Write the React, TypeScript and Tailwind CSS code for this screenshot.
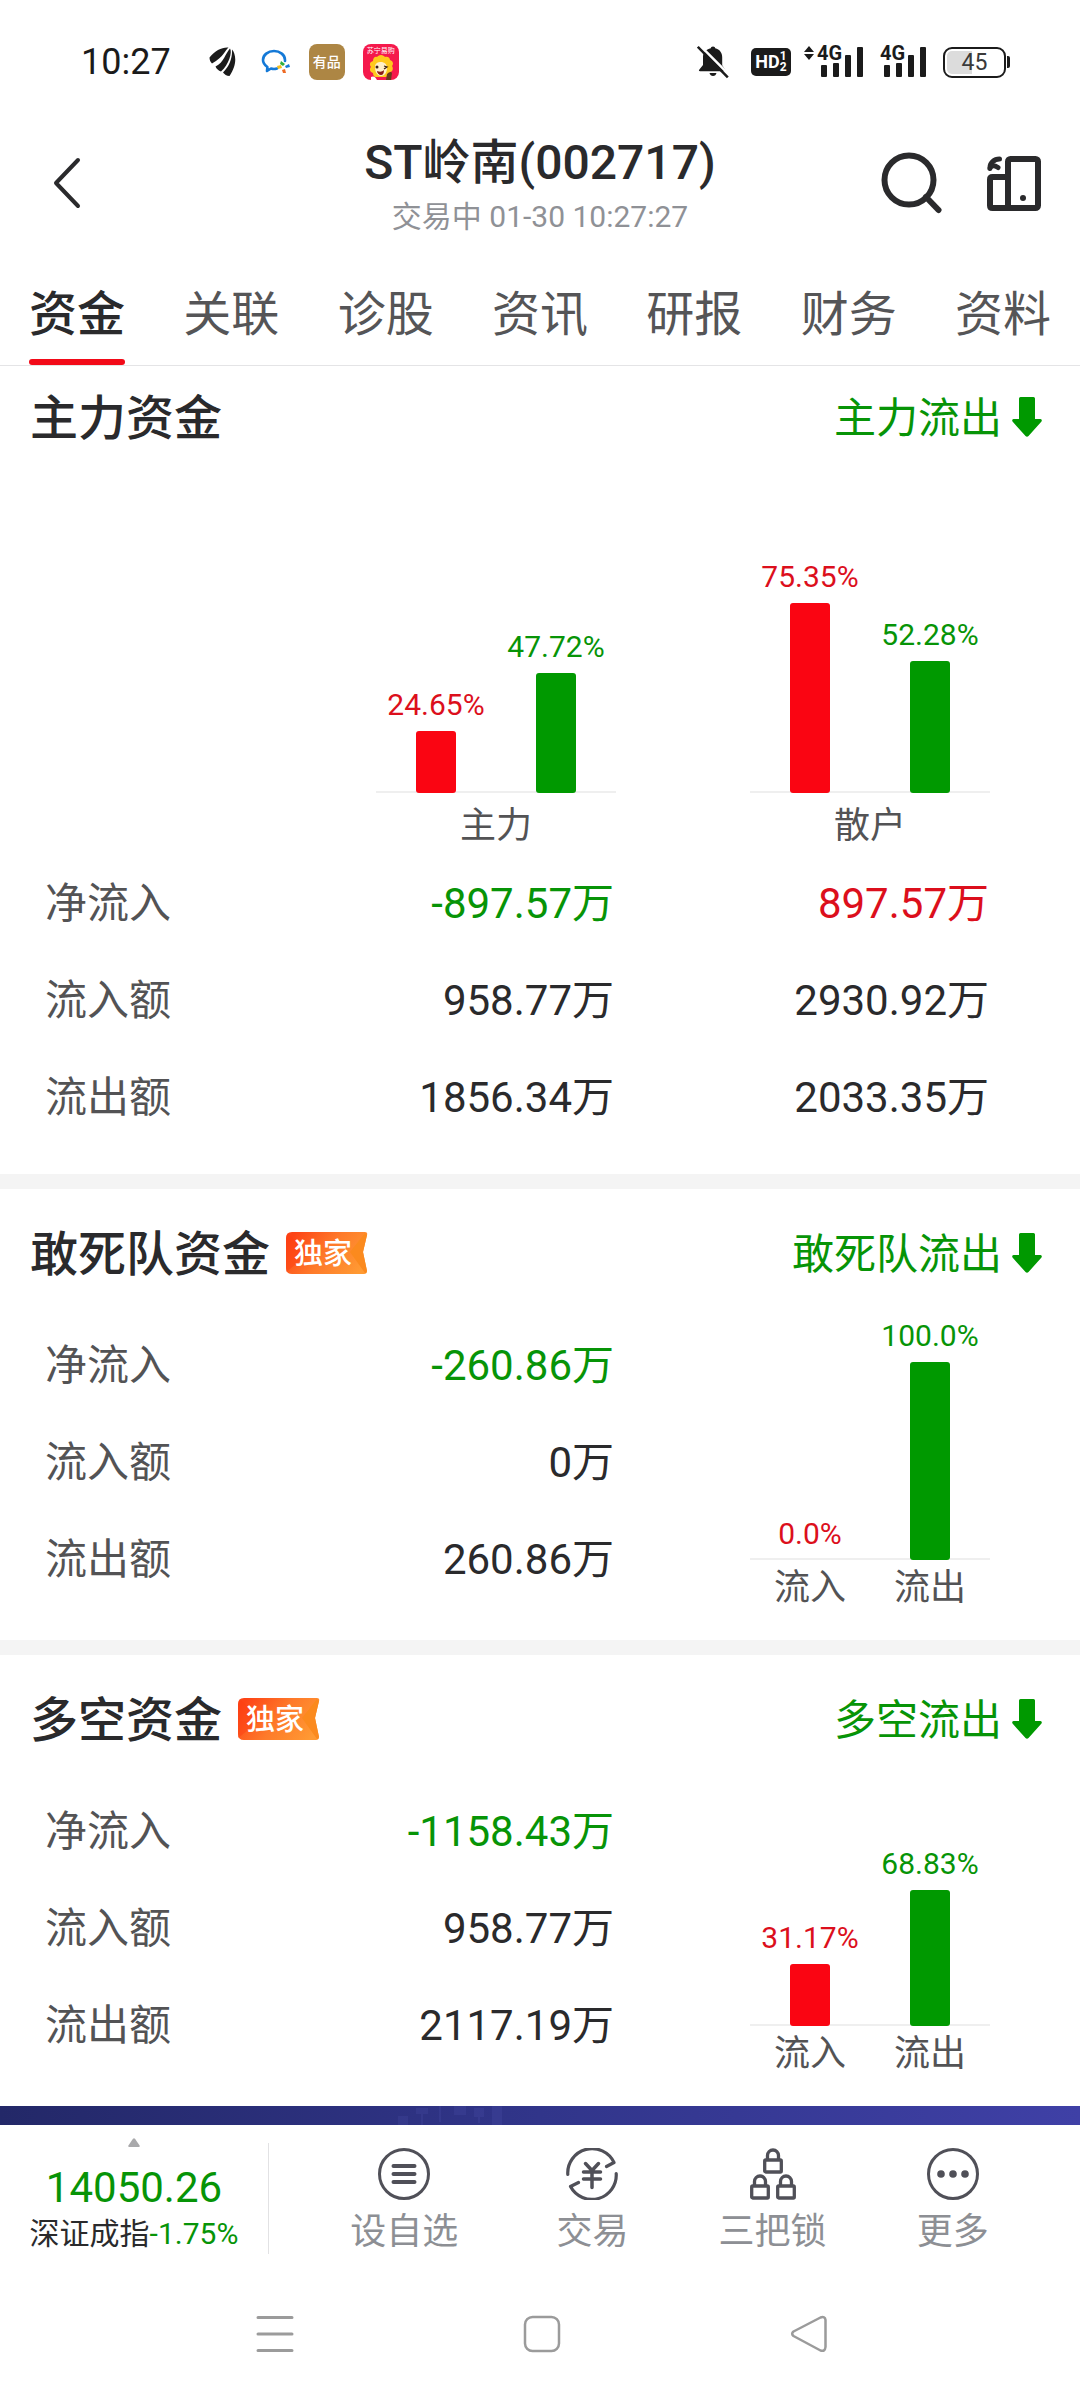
import type { ReactNode } from 'react';

type Tone = 'up' | 'down' | 'plain';

interface Bar {
  value: number;
  text: string;
  tone: 'up' | 'down';
  label?: string;
}

interface Row {
  label: string;
  cells: { text: string; tone: Tone }[];
}

const toneText: Record<Tone, string> = {
  up: 'text-[#dc0f1c]',
  down: 'text-[#079407]',
  plain: 'text-[#2a2a2c]',
};

const toneBar = {
  up: 'bg-[#fa0512]',
  down: 'bg-[#009900]',
};

/* ---------- status bar ---------- */

function WingIcon() {
  return (
    <svg width="28" height="32" viewBox="0 0 28 32" fill="#1b1b1b" aria-hidden="true">
      <path d="M.5 11.500C6 4.500 13 1 19.500 1.500 16 4 15 11 3 17.500 1.500 16 .5 14 .5 11.500Z" />
      <path d="M6.500 20.500C15 16.500 16.500 7 21 2.500c2.500 3.500-1 16-9 23C9.500 24.500 7.500 23 6.500 20.500Z" />
      <path d="M14 26.500C21 20 23.500 11 23 3.500c4 4.500 5.500 15-2.500 26.500-3-.2-5-1.500-6.500-3.500Z" />
    </svg>
  );
}

function ChatIcon() {
  return (
    <svg width="30" height="26" viewBox="0 0 30 26" fill="none" aria-hidden="true">
      <path
        d="M16 19.500c-2 .6-4 .6-6 0L6 22l.4-4C3.500 16 2 13.500 2 11 2 6 7 2 13 2s11 4 11 9v1"
        stroke="#1479d7"
        strokeWidth="2.600"
        strokeLinejoin="round"
        strokeLinecap="round"
      />
      <path d="m20 12 4 3-2 2-3-2z" fill="#2fae3f" />
      <path d="m28 15 1 3-4 1-1-2z" fill="#1479d7" />
      <path d="m24 20 1 4-3 0-1-3z" fill="#ee6a24" />
      <path d="m16 17 4-1 1 3-4 1z" fill="#f4bd1c" />
    </svg>
  );
}

function LionIcon() {
  return (
    <span className="relative block h-[36px] w-[36px]">
      <svg width="36" height="36" viewBox="0 0 36 36" className="rounded-[8px]" aria-hidden="true">
        <rect width="36" height="36" fill="#f5194c" />
        <path
          d="M18 11c2 0 3 1 4 2 3-1 5 1 5 3 3 1 4 4 2 6 2 3 0 6-2 6-1 3-3 5-5 5H13c-2 0-3-2-3-4-3-1-4-4-2-6-2-3-1-5 2-6 0-3 2-5 4-4 1-1 2-2 4-2Z"
          fill="#ffc91c"
        />
        <path d="M12 23c0-4 3-5 6-5s6 2 6 6c0 5-3 8-6 8s-6-3-6-9Z" fill="#fff0c9" />
        <circle cx="14" cy="23" r="1.500" fill="#3a2214" />
        <path d="m21 22 3 1-3 2" stroke="#3a2214" strokeWidth="1.300" fill="none" />
        <path d="M14 27c3 1 5 1 7-1 0 3-1 5-3 5s-4-2-4-4Z" fill="#8b1a16" />
        <path d="M24 30c2-2 4-3 5-1l-1 7h-5z" fill="#6b3a1c" />
        <path d="M8 33c2-1 4-1 6 3H8z" fill="#fff" />
      </svg>
      <span className="absolute inset-x-0 top-[2px] text-center text-[7px] leading-[10px] whitespace-nowrap text-white">苏宁易购</span>
    </span>
  );
}

function MutedBellIcon() {
  return (
    <svg width="32" height="34" viewBox="0 0 32 34" aria-hidden="true">
      <path
        d="M16 1.500c1.500 0 2 .8 2.200 1.800 4.500 1 7 4.500 7 9v8l3 4.500c.4.800.2 1.400-.8 1.400H3c-1 0-1.400-.6-.8-1.400L6 20v-8c0-4.500 3-7.700 7.800-8.700.2-1 .7-1.800 2.200-1.800Z"
        fill="#1b1b1b"
      />
      <path d="M12.500 28h7c-.5 2-1.700 3-3.500 3s-3-1-3.500-3Z" fill="#1b1b1b" />
      <path d="m2.500 0 30 30" stroke="#fff" strokeWidth="2.500" />
      <path d="m.8 1.800 30 30.500" stroke="#1b1b1b" strokeWidth="2.500" />
    </svg>
  );
}

function SignalIcon({ arrows }: { arrows?: boolean }) {
  return (
    <span className="relative block h-[34px] w-[62px]">
      <svg width="62" height="34" viewBox="0 0 62 34" fill="#1b1b1b" aria-hidden="true">
        {arrows && (
          <>
            <path d="m6 1 5 6H1zM6 15l5-6H1z" />
          </>
        )}
        <rect x="18" y="20" width="6" height="12" rx="1" />
        <rect x="30" y="18" width="6" height="14" rx="1" />
        <rect x="42" y="10" width="6" height="22" rx="1" />
        <rect x="54" y="2" width="6" height="30" rx="1" />
      </svg>
      <span className="absolute -top-[2px] left-[14px] text-[20px] leading-[20px] font-bold">4G</span>
    </span>
  );
}

function StatusBar() {
  return (
    <div className="flex h-[124px] items-center justify-between pr-[70px] pl-[81px] text-[#1b1b1b]">
      <div className="flex items-center">
        <span className="text-[36px] leading-[40px]">10:27</span>
        <div className="ml-[38px] flex items-center gap-[18px]">
          <WingIcon />
          <span className="ml-[6px]">
            <ChatIcon />
          </span>
          <span className="flex h-[36px] w-[36px] items-center justify-center rounded-[8px] bg-[#ad8644] text-[14px] leading-none font-medium text-white">
            有品
          </span>
          <LionIcon />
        </div>
      </div>
      <div className="flex items-center">
        <MutedBellIcon />
        <span className="ml-[22px] flex h-[28px] w-[40px] items-center justify-center rounded-[5px] bg-[#1b1b1b] font-bold text-white">
          <span className="text-[18px] leading-none">HD</span>
          <span className="flex flex-col text-[12px] leading-[11px]">
            <span>1</span>
            <span>2</span>
          </span>
        </span>
        <span className="ml-[12px] flex gap-px">
          <SignalIcon arrows />
          <SignalIcon />
        </span>
        <span className="relative ml-[15px] flex h-[31px] w-[63px] items-center justify-center rounded-[9px] border-2 border-[#1b1b1b] text-[23px] leading-none text-[#3a3a3a]">
          <span className="absolute top-[2px] bottom-[2px] left-[2px] w-[25px] rounded-l-[5px] bg-[#dcdcdc]" />
          <span className="relative">45</span>
        </span>
        <span className="ml-px h-[12px] w-[3px] rounded-r-[2px] bg-[#1b1b1b]" />
      </div>
    </div>
  );
}

/* ---------- header ---------- */

function Header() {
  return (
    <header className="grid h-[117px] grid-cols-[1fr_auto_1fr] items-center">
      <div className="pl-[49px]">
        <button type="button" aria-label="返回" className="block">
          <svg width="36" height="56" viewBox="0 0 36 56" fill="none" aria-hidden="true">
            <path d="M29 5 7 28l22 23" stroke="#2a2a2c" strokeWidth="4" strokeLinecap="round" strokeLinejoin="round" />
          </svg>
        </button>
      </div>
      <div className="pt-[2px] text-center">
        <h1 className="text-[48px] leading-[66px] font-medium text-[#2a2a2c]">ST岭南(002717)</h1>
        <p className="text-[30px] leading-[42px] text-[#8f9196]">交易中 01-30 10:27:27</p>
      </div>
      <div className="flex items-center justify-end gap-[43px] pr-[38px]">
        <button type="button" aria-label="搜索">
          <svg width="62" height="62" viewBox="0 0 62 62" fill="none" stroke="#2a2a2c" strokeWidth="6" aria-hidden="true">
            <circle cx="28" cy="28" r="24.500" />
            <path d="m45 45 12.500 13" strokeLinecap="round" />
          </svg>
        </button>
        <button type="button" aria-label="机构">
          <svg width="56" height="56" viewBox="0 0 56 56" fill="none" stroke="#2a2a2c" aria-hidden="true">
            <rect x="22" y="4" width="30" height="49" rx="2.500" strokeWidth="6" />
            <path d="M22 22H6.500Q4 22 4 24.500V50.500Q4 53 6.500 53H24" strokeWidth="6" />
            <path d="M13.500 4C8 4 4 8 4 12.500" strokeWidth="5" strokeLinecap="round" />
            <path d="M12 12.500C9 10.500 5 9.500 4 13.500" strokeWidth="5" strokeLinecap="round" />
            <circle cx="37" cy="43" r="3" fill="#2a2a2c" stroke="none" />
          </svg>
        </button>
      </div>
    </header>
  );
}

const tabs = ['资金', '关联', '诊股', '资讯', '研报', '财务', '资料'];

function Tabs() {
  return (
    <nav className="flex justify-between border-b border-[#e4e4e6] px-[29px]">
      {tabs.map((tab, i) => (
        <button
          key={tab}
          type="button"
          aria-current={i === 0 ? 'page' : undefined}
          className={
            i === 0
              ? 'flex flex-col pt-[46px] text-[48px] leading-[56px] font-medium text-[#2a2a2c]'
              : 'flex flex-col pt-[46px] text-[48px] leading-[56px] text-[#555557]'
          }
        >
          {tab}
          <span className={i === 0 ? 'mt-[16px] h-[6px] w-full rounded-full bg-[#f20a18]' : 'mt-[16px] h-[6px] w-full'} />
        </button>
      ))}
    </nav>
  );
}

/* ---------- fund sections ---------- */

function DownArrow() {
  return (
    <svg width="30" height="40" viewBox="0 0 30 40" fill="#009900" aria-hidden="true">
      <path d="M8.500 0h13q1.500 0 1.500 1.500V22h5.500q2 .5 1 2.500L16.500 39q-1.500 1.500-3 0L.5 24.500q-1-2 1-2.500H7V1.500Q7 0 8.500 0Z" />
    </svg>
  );
}

function ExclusiveBadge() {
  return (
    <span className="relative ml-[16px] block h-[42px] w-[82px]">
      <svg width="82" height="42" viewBox="0 0 82 42" className="absolute inset-0" aria-hidden="true">
        <defs>
          <linearGradient id="badge" x1="0" y1="0.300" x2="1" y2="0.700">
            <stop offset="0" stopColor="#fd4416" />
            <stop offset="0.500" stopColor="#fe7a2a" />
            <stop offset="1" stopColor="#ff9a33" />
          </linearGradient>
        </defs>
        <path d="M6 0H79q3 0 2 3l-4 17 4 19q0 3-3 3H6q-6 0-6-6V6Q0 0 6 0Z" fill="url(#badge)" />
        <path d="m79 1-15 19 15 21h1l1-2-4-19 4-17z" fill="#fb8a1e" />
        <path d="m0 40 24-19L2 2Q0 4 0 6z" fill="#fd3f12" opacity="0.450" />
      </svg>
      <span className="relative block pt-px pl-[8px] text-[29px] leading-[42px] font-medium text-white">独家</span>
    </span>
  );
}

function SectionHeader({ title, status, exclusive, compact }: { title: string; status: string; exclusive?: boolean; compact?: boolean }) {
  return (
    <div
      className={
        compact
          ? 'flex h-[102px] items-center justify-between pr-[38px] pl-[30px]'
          : 'flex h-[128px] items-center justify-between pr-[38px] pl-[30px]'
      }
    >
      <div className="flex items-center">
        <h2 className="pt-[4px] text-[48px] leading-[56px] font-medium text-[#2a2a2c]">{title}</h2>
        {exclusive && <ExclusiveBadge />}
      </div>
      <div className="flex items-center gap-[10px] text-[42px] leading-[48px] text-[#079407]">
        <span className="pt-[4px]">{status}</span>
        <DownArrow />
      </div>
    </div>
  );
}

function BarChart({ bars, scale, caption }: { bars: Bar[]; scale: number; caption?: string }) {
  return (
    <figure className="w-[240px]">
      <div className="relative flex items-end">
        <div className="absolute inset-x-0 bottom-0 h-[2px] bg-[#efefef]" />
        {bars.map((bar) => (
          <div key={bar.text} className="relative flex w-1/2 flex-col items-center">
            <span className={`mb-[8px] text-[30px] leading-[36px] ${toneText[bar.tone]}`}>{bar.text}</span>
            <span className={`w-[40px] rounded-[3px] ${toneBar[bar.tone]}`} style={{ height: Math.round(bar.value * scale) }} />
          </div>
        ))}
      </div>
      {caption ? (
        <figcaption className="pt-[8px] text-center text-[36px] leading-[50px] text-[#535355]">{caption}</figcaption>
      ) : (
        <figcaption className="flex pt-[4px] text-center text-[36px] leading-[48px] text-[#535355]">
          {bars.map((bar) => (
            <span key={bar.text} className="w-1/2">
              {bar.label}
            </span>
          ))}
        </figcaption>
      )}
    </figure>
  );
}

function FundTable({ rows }: { rows: Row[] }) {
  return (
    <table className="w-full table-fixed text-[42px] leading-[48px]">
      <tbody>
        {rows.map((row) => (
          <tr key={row.label} className="h-[97px]">
            <th scope="row" className="text-left font-normal text-[#535355]">
              {row.label}
            </th>
            {row.cells.map((cell, i) => (
              <td key={i} className={`text-right ${i === 1 ? 'w-[375px]' : ''} ${toneText[cell.tone]}`}>
                {cell.text}
              </td>
            ))}
          </tr>
        ))}
      </tbody>
    </table>
  );
}

function MainSection() {
  return (
    <section className="pb-[28px]">
      <SectionHeader title="主力资金" status="主力流出" compact />
      <div className="flex h-[387px] items-end justify-end gap-[134px] pr-[90px] pb-[4px]">
        <BarChart
          scale={2.52}
          caption="主力"
          bars={[
            { value: 24.65, text: '24.65%', tone: 'up' },
            { value: 47.72, text: '47.72%', tone: 'down' },
          ]}
        />
        <BarChart
          scale={2.52}
          caption="散户"
          bars={[
            { value: 75.35, text: '75.35%', tone: 'up' },
            { value: 52.28, text: '52.28%', tone: 'down' },
          ]}
        />
      </div>
      <div className="pr-[91px] pl-[45px]">
        <FundTable
          rows={[
            { label: '净流入', cells: [{ text: '-897.57万', tone: 'down' }, { text: '897.57万', tone: 'up' }] },
            { label: '流入额', cells: [{ text: '958.77万', tone: 'plain' }, { text: '2930.92万', tone: 'plain' }] },
            { label: '流出额', cells: [{ text: '1856.34万', tone: 'plain' }, { text: '2033.35万', tone: 'plain' }] },
          ]}
        />
      </div>
    </section>
  );
}

function FlowSection({ title, status, values, bars }: { title: string; status: string; values: string[]; bars: Bar[] }) {
  const labels = ['净流入', '流入额', '流出额'];
  return (
    <section className="pb-[28px]">
      <SectionHeader title={title} status={status} exclusive />
      <div className="flex items-end gap-[136px] pr-[90px] pl-[45px]">
        <div className="flex-1 pb-[4px]">
          <FundTable
            rows={labels.map((label, i) => ({
              label,
              cells: [{ text: values[i], tone: i === 0 ? 'down' : 'plain' }],
            }))}
          />
        </div>
        <BarChart scale={1.98} bars={bars} />
      </div>
    </section>
  );
}

function Divider() {
  return <div className="h-[15px] bg-[#f4f4f4]" />;
}

function PromoStrip() {
  return (
    <div className="flex h-[19px] justify-center overflow-hidden bg-linear-to-r from-[#232868] via-[#31358a] to-[#3f40a6]">
      <svg width="300" height="19" viewBox="0 0 300 19" fill="#6a70cf" opacity="0.120" aria-hidden="true">
        <path d="M8 10h10v9H8zM26 2h12v6H26zM31 8h2v11h-2zM49 0h2v16h-2zM64 0h12v9H64zM84 2h10v9H84zM88 11h2v6h-2zM102 0h10v19h-10z" />
      </svg>
    </div>
  );
}

/* ---------- bottom bars ---------- */

function ListIcon() {
  return (
    <svg width="52" height="52" viewBox="0 0 52 52" fill="none" stroke="#505058" strokeLinecap="round" aria-hidden="true">
      <circle cx="26" cy="26" r="24.500" strokeWidth="3" />
      <path d="M15.500 18h21M15.500 26h21M15.500 34h21" strokeWidth="4" />
    </svg>
  );
}

function TradeIcon() {
  return (
    <svg width="52" height="52" viewBox="0 0 52 52" fill="none" stroke="#505058" strokeWidth="3.200" strokeLinecap="round" strokeLinejoin="round" aria-hidden="true">
      <path d="M1.800 26.500A24.300 24.300 0 0 1 48 14.500L40.500 18.500" />
      <path d="M50.200 25.500A24.300 24.300 0 0 1 4.500 38.500L12.500 34.500" />
      <path d="m19.500 15.500 6.500 7 6.500-7M26 22.500v17M17.500 24h17M17.500 31h17" strokeWidth="3.500" />
    </svg>
  );
}

function Lock({ x, y }: { x: number; y: number }) {
  return (
    <g transform={`translate(${x} ${y})`}>
      <rect x="1.700" y="11.500" width="16.600" height="12" rx="1" />
      <path d="M4.500 11.500V7a5.500 5.500 0 0 1 11 0v4.500" />
    </g>
  );
}

function LocksIcon() {
  return (
    <svg width="52" height="52" viewBox="0 0 52 52" fill="none" stroke="#505058" strokeWidth="3.300" aria-hidden="true">
      <Lock x={16} y={0.5} />
      <Lock x={3} y={26.500} />
      <Lock x={29} y={26.500} />
    </svg>
  );
}

function MoreIcon() {
  return (
    <svg width="52" height="52" viewBox="0 0 52 52" fill="none" stroke="#505058" aria-hidden="true">
      <circle cx="26" cy="26" r="24.500" strokeWidth="3" />
      <g fill="#505058" stroke="none">
        <circle cx="14" cy="26" r="3.800" />
        <circle cx="26" cy="26" r="3.800" />
        <circle cx="38" cy="26" r="3.800" />
      </g>
    </svg>
  );
}

const actions: { label: string; icon: ReactNode }[] = [
  { label: '设自选', icon: <ListIcon /> },
  { label: '交易', icon: <TradeIcon /> },
  { label: '三把锁', icon: <LocksIcon /> },
  { label: '更多', icon: <MoreIcon /> },
];

function ActionBar() {
  return (
    <footer className="flex items-end pt-[13px] pb-[14px]">
      <button type="button" className="flex w-[268px] flex-col items-center">
        <svg width="12" height="9" viewBox="0 0 12 9" fill="#a9a9ab" aria-hidden="true">
          <path d="M5 .8q1-1.200 2 0l4.600 6.700q.7 1.500-1 1.500H1.400Q-.3 9 .4 7.500Z" />
        </svg>
        <span className="mt-[17px] text-[42px] leading-[48px] text-[#079407]">14050.26</span>
        <span className="mt-[2px] text-[30px] leading-[40px] text-[#2a2a2c]">
          深证成指<span className="text-[#079407]">-1.75%</span>
        </span>
      </button>
      <div className="h-[111px] w-px bg-[#e2e2e4]" />
      <div className="grid flex-1 grid-cols-[196fr_180fr_180fr_180fr] px-[37px]">
        {actions.map((action) => (
          <button key={action.label} type="button" className="flex flex-col items-center">
            {action.icon}
            <span className="mt-[10px] text-[36px] leading-[44px] text-[#8d8f94]">{action.label}</span>
          </button>
        ))}
      </div>
    </footer>
  );
}

function SystemNav() {
  return (
    <nav className="grid h-[132px] grid-cols-3 place-items-center pr-[137px] pl-[141px]">
      <button type="button" aria-label="最近任务">
        <svg width="38" height="38" viewBox="0 0 38 38" stroke="#9b9b9b" strokeWidth="3" strokeLinecap="round" aria-hidden="true">
          <path d="M2 2.500h34M2 19h34M2 35.500h34" />
        </svg>
      </button>
      <button type="button" aria-label="主屏幕">
        <svg width="38" height="38" viewBox="0 0 38 38" fill="none" stroke="#9b9b9b" strokeWidth="2.500" aria-hidden="true">
          <rect x="2" y="2" width="34" height="34" rx="7.500" />
        </svg>
      </button>
      <button type="button" aria-label="返回上一级">
        <svg width="38" height="38" viewBox="0 0 38 38" fill="none" stroke="#9b9b9b" strokeWidth="2.500" strokeLinejoin="round" aria-hidden="true">
          <path d="M3.500 16.500 30.500 2.500Q35 1 35.500 5V32Q35 37 30.500 35.500L3.500 21Q.8 18.700 3.500 16.500Z" />
        </svg>
      </button>
    </nav>
  );
}

export default function App() {
  return (
    <div className="flex min-h-screen flex-col bg-white font-[Roboto,'Noto_Sans_CJK_SC',sans-serif]" lang="zh-CN">
      <StatusBar />
      <Header />
      <Tabs />
      <main>
        <MainSection />
        <Divider />
        <FlowSection
          title="敢死队资金"
          status="敢死队流出"
          values={['-260.86万', '0万', '260.86万']}
          bars={[
            { value: 0, text: '0.0%', tone: 'up', label: '流入' },
            { value: 100, text: '100.0%', tone: 'down', label: '流出' },
          ]}
        />
        <Divider />
        <FlowSection
          title="多空资金"
          status="多空流出"
          values={['-1158.43万', '958.77万', '2117.19万']}
          bars={[
            { value: 31.17, text: '31.17%', tone: 'up', label: '流入' },
            { value: 68.83, text: '68.83%', tone: 'down', label: '流出' },
          ]}
        />
        <PromoStrip />
      </main>
      <ActionBar />
      <SystemNav />
    </div>
  );
}
